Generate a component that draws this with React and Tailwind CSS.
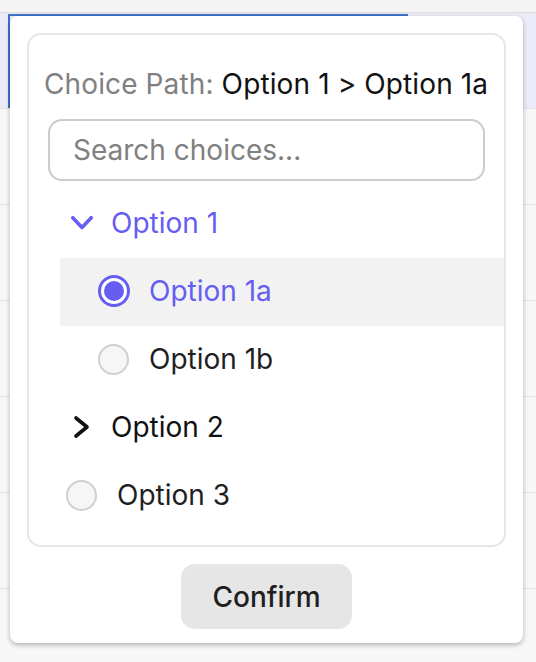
import React from 'react'

const PURPLE = 'text-[#665df2]'

function ChevronDown() {
  return (
    <svg width="32" height="32" viewBox="0 0 32 32" fill="none">
      <polyline points="6.75,10.75 16,20.5 25.25,10.75" stroke="#665df2" strokeWidth="3.6" strokeLinecap="round" strokeLinejoin="round" />
    </svg>
  )
}

function ChevronRight() {
  return (
    <svg width="32" height="32" viewBox="0 0 32 32" fill="none">
      <polyline points="10,7 21,16 10,25" stroke="#111111" strokeWidth="3.6" strokeLinecap="round" strokeLinejoin="round" />
    </svg>
  )
}

function Radio({ checked }) {
  if (checked) {
    return (
      <span className="w-[32px] h-[32px] rounded-full border-[3px] border-[#665df2] bg-white flex items-center justify-center shrink-0">
        <span className="w-[20px] h-[20px] rounded-full bg-[#665df2]" />
      </span>
    )
  }
  return <span className="w-[31px] h-[31px] rounded-full border-2 border-[#d0d0d0] bg-[#f6f6f6] shrink-0" />
}

function Row({ children, active, className = '' }) {
  return (
    <div className={`h-[68px] pb-[2px] flex items-center ${active ? 'bg-[#f2f2f2]' : ''} ${className}`}>
      {children}
    </div>
  )
}

export default function App() {
  return (
    <div className="relative w-[536px] h-[662px] overflow-hidden bg-[#f7f7f7] font-['Inter',sans-serif]">
      {/* table behind the popup */}
      <div className="flex flex-col">
        <div className="h-[13px] bg-[#f4f4f4] border-b border-[#dcdcdc]" />
        <div className="h-[96px] bg-[#ebebf9] border-b border-[#e0e0e0] pl-[8px] pt-[1px]">
          <div className="w-[400px] h-full border-2 border-[#3d72c7]" />
        </div>
        {[0, 1, 2, 3, 4, 5].map(i => (
          <div key={i} className="h-[96px] border-b border-[#e2e2e2]" />
        ))}
      </div>

      {/* popup */}
      <div className="absolute left-[10px] top-[16px] w-[513px] h-[627px] bg-white rounded-[8px] shadow-[0_2px_5px_rgba(0,0,0,0.28)] p-[17px] pb-[14px] flex flex-col">
        <div className="border-2 border-[#e6e6e6] rounded-[14px] pt-[29px] pb-[15px] text-[28px]">
          <div className="pl-[15px] leading-[40px] whitespace-nowrap tracking-[0.12px]">
            <span className="text-[#808080]">Choice Path: </span>
            <span className="text-[#111111]">Option 1 &gt; Option 1a</span>
          </div>

          <div className="ml-[19px] mt-[15px] w-[437px] h-[62px] border-2 border-[#cccccc] rounded-[14px] flex items-center pl-[23px]">
            <input
              placeholder="Search choices..."
              className="w-full bg-transparent outline-none text-[28px] text-[#111] placeholder:text-[#808080]"
            />
          </div>

          <div className="mt-[9px] text-[#1f1f1f]">
            <Row className="pl-[37px]">
              <ChevronDown />
              <span className={`ml-[13px] ${PURPLE}`}>Option 1</span>
            </Row>
            <div className="ml-[31px]">
              <Row active className="pl-[38px]">
                <Radio checked />
                <span className={`ml-[19px] ${PURPLE}`}>Option 1a</span>
              </Row>
              <Row className="pl-[38px]">
                <Radio />
                <span className="ml-[20px]">Option 1b</span>
              </Row>
            </div>
            <Row className="pl-[37px]">
              <ChevronRight />
              <span className="ml-[13px] text-[#111111]">Option 2</span>
            </Row>
            <Row className="pl-[37px]">
              <Radio />
              <span className="ml-[20px]">Option 3</span>
            </Row>
          </div>
        </div>

        <div className="mt-[17px] flex justify-center">
          <button className="w-[171px] h-[65px] rounded-[14px] bg-[#e6e6e6] text-[28px] font-medium text-[#1f1f1f]">
            Confirm
          </button>
        </div>
      </div>
    </div>
  )
}
